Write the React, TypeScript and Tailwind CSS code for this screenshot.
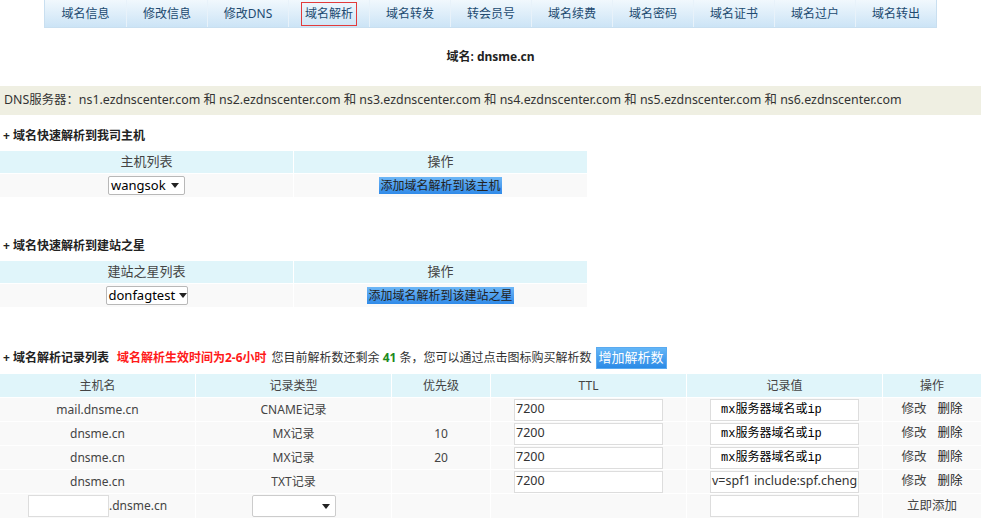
const font = "font-['Noto_Sans','Noto_Sans_CJK_SC',sans-serif]";

const tabs = ["域名信息", "修改信息", "修改DNS", "域名解析", "域名转发", "转会员号", "域名续费", "域名密码", "域名证书", "域名过户", "域名转出"];

const cols = "grid grid-cols-[195px_195px_98px_195px_195px_98px] gap-px";

function Arrow() {
	return <span className="ml-auto mr-[5px] inline-block border-x-[4px] border-t-[5px] border-x-transparent border-t-[#222]" />;
}

function Select({ value, w }: { value: string; w: string }) {
	return (
		<div className={`${w} h-[19px] flex items-center bg-white border border-[#b8b8b8] rounded-[2px] pl-[2px] text-[13px] text-black`}>
			<span className="pr-[4px]">{value}</span>
			<Arrow />
		</div>
	);
}

function Input({ value, mono }: { value: string; mono?: boolean }) {
	return (
		<div className={`w-[149px] h-[22px] bg-white border border-[#ddd] flex items-center overflow-hidden whitespace-nowrap ${mono ? "pl-[10px] font-['Liberation_Mono','Noto_Sans_CJK_SC',monospace] text-[12px] text-black" : "pl-px text-[12.5px] text-[#333]"}`}>
			{value}
		</div>
	);
}

function QuickTable({ title, listName, select, selectW, button }: { title: string; listName: string; select: string; selectW: string; button: string }) {
	return (
		<div>
			<h3 className="h-[17px] pl-[3px] text-[12px] font-bold text-[#222] leading-[17px]">+ {title}</h3>
			<div className="mt-[7px] w-[587px] grid grid-cols-2 gap-px text-[13px] text-[#444]">
				<div className="h-[22px] bg-[#e0f5fa] flex items-center justify-center">{listName}</div>
				<div className="h-[22px] bg-[#e0f5fa] flex items-center justify-center">操作</div>
				<div className="h-[23px] bg-[#f9f9f9] flex items-center justify-center">
					<Select value={select} w={selectW} />
				</div>
				<div className="h-[23px] bg-[#f9f9f9] flex items-center justify-center">
					<span className="px-px h-[17px] leading-[17px] text-[12px] bg-gradient-to-b from-[#6db6f6] to-[#2f8ae8] text-[#222]">{button}</span>
				</div>
			</div>
		</div>
	);
}

const records = [
	{ host: "mail.dnsme.cn", type: "CNAME记录", pri: "", val: "mx服务器域名或ip", mono: true },
	{ host: "dnsme.cn", type: "MX记录", pri: "10", val: "mx服务器域名或ip", mono: true },
	{ host: "dnsme.cn", type: "MX记录", pri: "20", val: "mx服务器域名或ip", mono: true },
	{ host: "dnsme.cn", type: "TXT记录", pri: "", val: "v=spf1 include:spf.chengm", mono: false },
];

export default function App() {
	return (
		<div className={`${font} w-[981px] bg-white text-[#333]`}>
			<nav className="flex justify-center">
				<ul className="flex border-b border-x border-[#c9dff0]">
					{tabs.map((t, i) => (
						<li key={t} className={`w-[81px] h-[27px] flex items-center justify-center text-[12px] text-[#214a70] bg-gradient-to-b from-[#f1f8fd] to-[#cce4f6] ${i > 0 ? "border-l border-[#e8f2fa]" : ""}`}>
							<span className={i === 3 ? "border border-[#e23b3b] px-[3px] py-[2px]" : ""}>{t}</span>
						</li>
					))}
				</ul>
			</nav>

			<div className="h-[58px] flex items-center justify-center text-[12px] text-[#222] font-bold">
				<span className="font-semibold">域名:</span>&nbsp;dnsme.cn
			</div>

			<div className="h-[29px] bg-[#efefe2] flex items-center pl-[4px] text-[12.4px] text-[#333]">
				DNS服务器：ns1.ezdnscenter.com 和 ns2.ezdnscenter.com 和 ns3.ezdnscenter.com 和 ns4.ezdnscenter.com 和 ns5.ezdnscenter.com 和 ns6.ezdnscenter.com
			</div>

			<div className="mt-[12px]">
				<QuickTable title="域名快速解析到我司主机" listName="主机列表" select="wangsok" selectW="w-[77px]" button="添加域名解析到该主机" />
			</div>

			<div className="mt-[40px]">
				<QuickTable title="域名快速解析到建站之星" listName="建站之星列表" select="donfagtest" selectW="w-[82px]" button="添加域名解析到该建站之星" />
			</div>

			<div className="mt-[40px] flex items-center h-[22px] pl-[3px] text-[12px]">
				<span className="font-bold text-[#222]">+ 域名解析记录列表</span>
				<span className="ml-[8px] font-bold text-[#ff1a1a]">域名解析生效时间为2-6小时</span>
				<span className="ml-[5px] text-[#333]">您目前解析数还剩余 <b className="text-[#1d8a1d]">41</b> 条，您可以通过点击图标购买解析数</span>
				<button className="ml-[4px] h-[22px] px-[2px] bg-gradient-to-b from-[#63b6f7] to-[#2a8ae6] border border-[#5aaaf0] text-white text-[13px]">增加解析数</button>
			</div>

			<div className={`${cols} mt-[5px] text-[12px] text-[#444]`}>
				{["主机名", "记录类型", "优先级", "TTL", "记录值", "操作"].map((h) => (
					<div key={h} className="h-[23px] bg-[#e0f5fa] flex items-center justify-center">{h}</div>
				))}
				{records.map((r, i) => (
					<div key={i} className="contents">
						<div className="h-[23px] bg-[#f9f9f9] flex items-center justify-center">{r.host}</div>
						<div className="h-[23px] bg-[#f9f9f9] flex items-center justify-center">{r.type}</div>
						<div className="h-[23px] bg-[#f9f9f9] flex items-center justify-center">{r.pri}</div>
						<div className="h-[23px] bg-[#f9f9f9] flex items-center justify-center"><Input value="7200" /></div>
						<div className="h-[23px] bg-[#f9f9f9] flex items-center justify-center"><Input value={r.val} mono={r.mono} /></div>
						<div className="h-[23px] bg-[#f9f9f9] flex items-center justify-center gap-[11px] text-[12.5px]">
							<span>修改</span>
							<span className="text-[#222]">删除</span>
						</div>
					</div>
				))}
				<div className="h-[24px] bg-[#f9f9f9] flex items-center justify-center">
					<div className="w-[81px] h-[22px] bg-white border border-[#ddd]" />
					<span>.dnsme.cn</span>
				</div>
				<div className="h-[24px] bg-[#f9f9f9] flex items-center justify-center">
					<div className="w-[84px] h-[22px] bg-white border border-[#ccc] rounded-[2px] flex items-center"><Arrow /></div>
				</div>
				<div className="h-[24px] bg-[#f9f9f9]" />
				<div className="h-[24px] bg-[#f9f9f9]" />
				<div className="h-[24px] bg-[#f9f9f9] flex items-center justify-center"><Input value="" /></div>
				<div className="h-[24px] bg-[#f9f9f9] flex items-center justify-center text-[12.5px]">立即添加</div>
			</div>
		</div>
	);
}
